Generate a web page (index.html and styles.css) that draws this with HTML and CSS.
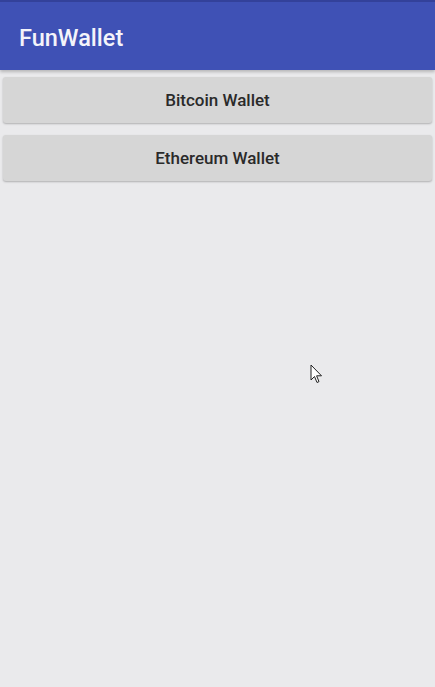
FILE: index.html
```html
<!DOCTYPE html>
<html>
<head>
<meta charset="utf-8">
<link rel="stylesheet" href="styles.css">
</head>
<body>
<div class="app">
  <header class="toolbar">
    <h1 class="title">FunWallet</h1>
  </header>
  <main class="content">
    <button class="btn">Bitcoin Wallet</button>
    <button class="btn">Ethereum Wallet</button>
  </main>
  <svg class="cursor" width="14" height="22" viewBox="0 0 14 22">
    <path d="M1 1 L1 16 L4.5 12.5 L7 18.5 L9 17.6 L6.6 11.8 L11.5 11.8 Z" fill="#fff" stroke="#222" stroke-width="1" stroke-linejoin="miter"/>
  </svg>
</div>
</body>
</html>
```

FILE: styles.css
```css
html, body {
  margin: 0;
  padding: 0;
  background: #eaeaec;
}
.app {
  position: relative;
  width: 435px;
  height: 687px;
  font-family: Roboto, "Noto Sans", sans-serif;
  background: #eaeaec;
}
.toolbar {
  height: 68px;
  background: #3f51b5;
  border-top: 2px solid #33419a;
  display: flex;
  align-items: center;
  padding-left: 19px;
  box-shadow: 0 2px 3px rgba(0,0,0,0.22);
}
.title {
  margin: 3px 0 0 0;
  color: #f4f4fa;
  font-size: 23.5px;
  font-weight: 500;
}
.content {
  padding: 7px 3px 0 3px;
  display: flex;
  flex-direction: column;
  gap: 12px;
}
.btn {
  height: 46px;
  border: none;
  border-radius: 3px;
  background: #d6d6d6;
  box-shadow: 0 1px 2px rgba(0,0,0,0.25);
  font-family: Roboto, "Noto Sans", sans-serif;
  font-size: 17px;
  font-weight: 500;
  color: #2a2a2a;
  padding: 0;
}
.cursor {
  position: absolute;
  left: 310px;
  top: 364px;
}
```
